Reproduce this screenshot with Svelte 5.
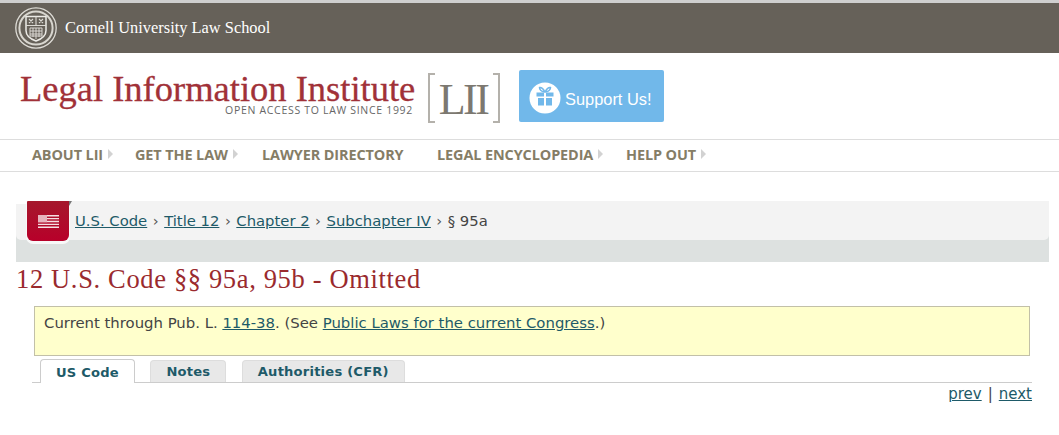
<script>
  const nav = [
    { label: 'ABOUT LII', arrow: true, w: 103 },
    { label: 'GET THE LAW', arrow: true, w: 127 },
    { label: 'LAWYER DIRECTORY', arrow: false, w: 175 },
    { label: 'LEGAL ENCYCLOPEDIA', arrow: true, w: 189 },
    { label: 'HELP OUT', arrow: true, w: 90 }
  ];
  const crumbs = ['U.S. Code', 'Title 12', 'Chapter 2', 'Subchapter IV'];
  const tabs = [
    { label: 'US Code', active: true },
    { label: 'Notes', active: false },
    { label: 'Authorities (CFR)', active: false }
  ];
</script>

<div class="page">
  <header class="cornell">
    <svg class="seal" width="42" height="42" viewBox="0 0 42 42" aria-hidden="true">
      <circle cx="21" cy="21" r="20.2" fill="none" stroke="#dedcd6" stroke-width="1.3" />
      <circle cx="21" cy="21" r="16.6" fill="none" stroke="#d8d6cf" stroke-width="2" />
      <path d="M11 9.500h20v14q0 7-10 10.500q-10-3.500-10-10.500z" fill="none" stroke="#ecebe6" stroke-width="1.500" />
      <path d="M11 18.500h20M21 9.500v9M14 12l4 4M18 12l-4 4M24 12l4 4M28 12l-4 4" fill="none" stroke="#dcdad4" stroke-width="1.100" />
      <path d="M15 21h12v8h-12zM18 21v9M21 21v11M24 21v9M15 24h12M15 27h12" fill="none" stroke="#e4e2dc" stroke-width="0.900" />
    </svg>
    <span>Cornell University Law School</span>
  </header>

  <div class="brand">
    <div class="wordmark">
      <div class="lii-name">Legal Information Institute</div>
      <div class="tagline">OPEN ACCESS TO LAW SINCE 1992</div>
    </div>
    <div class="bracket"><span>LII</span></div>
    <div class="support">
      <svg width="32" height="32" viewBox="0 0 32 32" aria-hidden="true">
        <circle cx="16" cy="16" r="15.500" fill="#fff" />
        <path d="M7.500 10.500h7.500v4H7.500zM17 10.500h7.500v4H17zM9 16h6v7.500H9zM17 16h6v7.500h-6z" fill="#71b8ea" />
        <path d="M15.500 10C13 9.500 10.500 8 10.500 5.500 12.500 5 15 7.500 15.800 10zM16.500 10C19 9.500 21.500 8 21.500 5.500 19.500 5 17 7.500 16.200 10z" fill="none" stroke="#71b8ea" stroke-width="1.500" />
      </svg>
      <span>Support Us!</span>
    </div>
  </div>

  <nav class="mainnav">
    {#each nav as item}
      <div class="navitem" style="width:{item.w}px">
        <span>{item.label}</span>
        {#if item.arrow}<i class="arrow"></i>{/if}
      </div>
    {/each}
  </nav>

  <div class="crumbwrap">
    <div class="crumbs">
      {#each crumbs as c}<a href="#top">{c}</a><span class="sep">›</span>{/each}<span>§ 95a</span>
    </div>
    <div class="flag">
      <svg width="21" height="13" viewBox="0 0 21 13" aria-hidden="true">
        <path d="M0 0h21v1.400H0zM0 2.900h21v1.400H0zM0 5.800h21v1.400H0zM0 8.700h21v1.400H0zM0 11.600h21V13H0z" fill="#f5dfe2" />
        <rect x="0" y="0" width="9" height="7.200" fill="#e6b4bd" />
      </svg>
    </div>
  </div>

  <h1>12 U.S. Code §§ 95a, 95b - Omitted</h1>

  <div class="notice">Current through Pub. L. <a href="#top">114-38</a>. (See <a href="#top">Public Laws for the current Congress</a>.)</div>

  <div class="tabs">
    {#each tabs as t}
      <div class="tab" class:active={t.active}>{t.label}</div>
    {/each}
  </div>

  <div class="pager"><a href="#top">prev</a><span class="bar">|</span><a href="#top">next</a></div>
</div>

<style>
  :global(body) { margin: 0; background: #fff; }
  .page { width: 1059px; height: 435px; overflow: hidden; font-family: "DejaVu Sans", sans-serif; color: #444; font-size: 14px; }
  a { color: #1e5a68; text-decoration: underline; }

  .cornell { display: flex; align-items: center; gap: 8px; height: 50px; padding-left: 15px; background: #666159; border-top: 3px solid #cfcfcf; color: #fff; font-family: "Liberation Serif", serif; font-size: 16.4px; box-sizing: content-box; }
  .seal { flex: none; margin-top: -1px; }

  .brand { display: flex; align-items: flex-start; height: 86px; border-bottom: 1px solid #ddd; }
  .wordmark { width: 395px; margin: 20px 0 0 20px; }
  .lii-name { font-family: "Liberation Serif", serif; font-size: 36.5px; line-height: 32px; color: #a13138; white-space: nowrap; -webkit-text-stroke: 0.3px #a13138; }
  .tagline { margin: 0 2px 0 0; text-align: right; font-family: "Open Sans", sans-serif; font-size: 10.5px; line-height: 11px; letter-spacing: 0.69px; color: #666; white-space: nowrap; }
  .bracket { margin: 20px 0 0 13px; width: 72px; height: 50px; box-sizing: border-box; border: 2px solid #b4b1ab; display: flex; justify-content: center; align-items: center; position: relative; font-family: "Liberation Serif", serif; font-size: 44px; letter-spacing: -2.5px; color: #7c7870; }
  .bracket::before { content: ""; position: absolute; top: -2px; left: 5px; right: 5px; background: #fff; height: 50px; }
  .bracket span { position: relative; top: 1px; left: -1px; }
  .support { margin: 17px 0 0 19px; width: 145px; height: 52px; box-sizing: border-box; padding: 3px 0 0 10px; background: #71b8ea; border-radius: 2px; display: flex; align-items: center; gap: 4px; color: #fff; font-family: "Liberation Sans", sans-serif; font-size: 16.4px; }
  .support span { margin-top: 3px; }

  .mainnav { display: flex; box-sizing: border-box; padding: 0 0 3px 32px; border-bottom: 1px solid #ddd; height: 32px; align-items: center; }
  .navitem { display: flex; align-items: center; gap: 5px; color: #857d66; font-family: "Open Sans", sans-serif; font-weight: 700; font-size: 14.45px; letter-spacing: -0.1px; white-space: nowrap; }
  .arrow { width: 0; height: 0; border-left: 5px solid #d2d2d2; border-top: 5px solid transparent; border-bottom: 5px solid transparent; }

  .crumbwrap { position: relative; margin: 29px 10px 0 16px; height: 61px; background: #dde1e0; }
  .crumbs { height: 39px; box-sizing: border-box; padding-left: 59px; background: #f3f3f3; border-radius: 0 0 5px 5px; display: flex; align-items: center; white-space: pre; font-size: 14.8px; color: #444; }
  .sep { color: #555; margin: 0 5.5px; }
  .crumbwrap::before { content: ""; position: absolute; left: 0; top: 0; width: 11px; height: 3px; background: #fff; }
  .flag { position: absolute; left: 11px; top: 0; width: 42px; height: 40px; background: linear-gradient(#a5182c, #b8002a); border-radius: 1px 0 6px 6px; box-shadow: 0 2px 0 1px #f8f8f8; display: flex; align-items: center; justify-content: center; }
  .flag::after { content: ""; position: absolute; left: 100%; top: 0; border-left: 3px solid #777; border-bottom: 5px solid transparent; }

  h1 { margin: 1px 0 0 16px; font-family: "Liberation Serif", serif; font-weight: 400; font-size: 26.5px; letter-spacing: 0.65px; line-height: 32px; color: #9a2a2e; }

  .notice { margin: 11px 29px 0 34px; height: 50px; box-sizing: border-box; padding: 7px 9px; background: #ffffcc; border: 1px solid #c2c0a8; font-size: 14.87px; line-height: 18px; color: #444; }

  .tabs { display: flex; gap: 15.5px; margin: 1px 27px 0 32px; height: 26px; box-sizing: border-box; padding-left: 8px; border-bottom: 1px solid #ccc; align-items: flex-end; }
  .tab { height: 22px; box-sizing: border-box; padding: 0 15px; background: #e8e8e8; border: 1px solid #ddd; border-bottom: 0; border-radius: 4px 4px 0 0; color: #1e5a68; font-weight: 700; font-size: 13.1px; line-height: 22px; letter-spacing: 0.2px; }
  .tab.active { background: #fff; line-height: 25px; border-color: #ccc; margin-bottom: -1px; height: 24px; }

  .pager { margin: 1px 27px 0 0; text-align: right; font-size: 15px; line-height: 20px; color: #444; }
  .bar { margin: 0 6px; }
</style>
